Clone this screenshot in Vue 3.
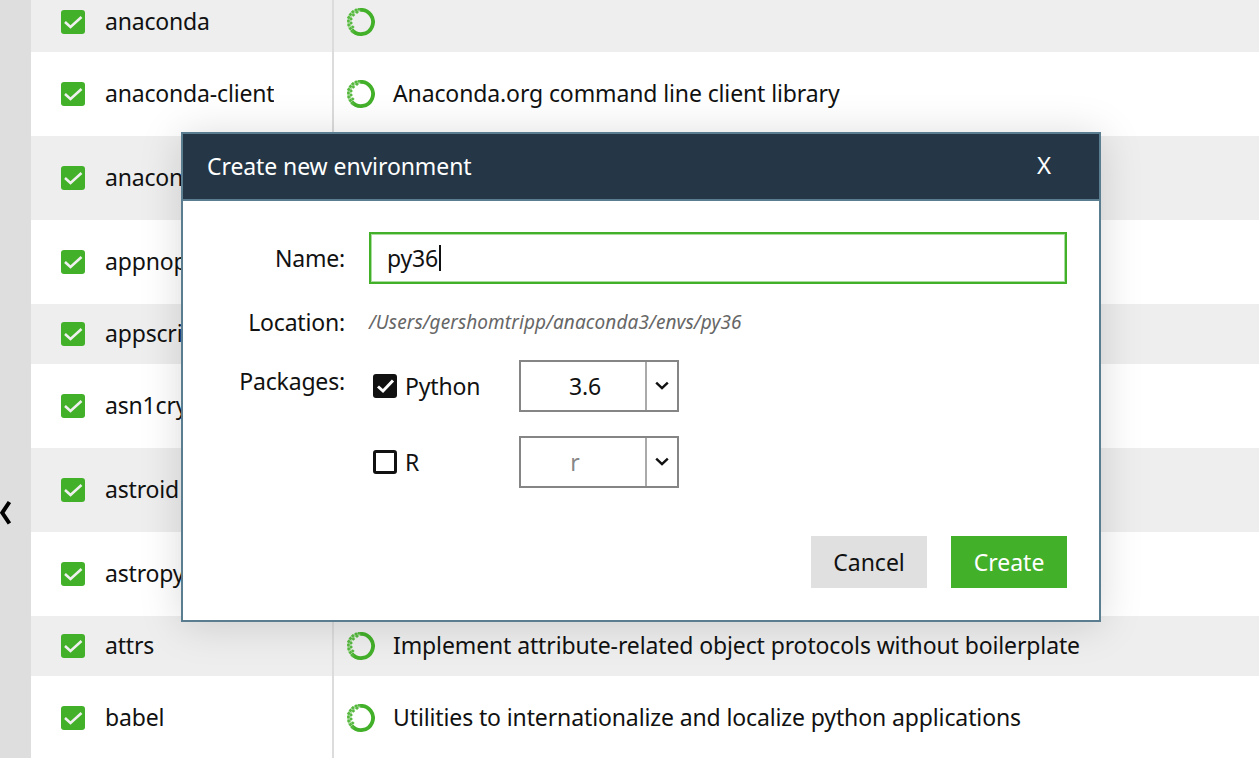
<script setup>
const rows = [
  { name: 'anaconda', desc: '', h: 60, shade: true },
  { name: 'anaconda-client', desc: 'Anaconda.org command line client library', h: 84 },
  { name: 'anaconda-navigator', desc: '', h: 84, shade: true },
  { name: 'appnope', desc: '', h: 84 },
  { name: 'appscript', desc: '', h: 60, shade: true },
  { name: 'asn1crypto', desc: '', h: 84 },
  { name: 'astroid', desc: '', h: 84, shade: true },
  { name: 'astropy', desc: '', h: 84 },
  { name: 'attrs', desc: 'Implement attribute-related object protocols without boilerplate', h: 60, shade: true },
  { name: 'babel', desc: 'Utilities to internationalize and localize python applications', h: 84 }
]
const dots = [[-12.6,-1],[-12.2,3],[-12.2,-4.6],[-10.6,6.6],[-10.6,-7.6],[-8.4,9.4],[-8.2,-10.2],[-5,-12],[-2,-12.8],[-9.9,1],[-9.9,-3],[-7.6,-7],[-4,-9.8],[-8.2,5]]
</script>

<template>
  <div class="page">
    <aside class="side">
      <svg class="chev" width="11" height="26" viewBox="0 0 11 26"><path d="M9.4 2 L2.2 12.8 L9.4 23.5" fill="none" stroke="#000" stroke-width="4"/></svg>
    </aside>
    <main class="table">
      <div v-for="r in rows" :key="r.name" class="row" :class="{ shade: r.shade }" :style="{ height: r.h + 'px' }">
        <div class="c-name">
          <span class="tick">
            <svg width="24" height="24" viewBox="0 0 24 24"><path d="M4 12 L9.5 17 L20.5 7" fill="none" stroke="#f0f0f0" stroke-width="2.5"/></svg>
          </span>
          <span class="pkg">{{ r.name }}</span>
        </div>
        <div class="c-desc">
          <svg class="ring" width="28" height="28" viewBox="-14 -14 28 28">
            <path d="M-1 -12.1 A12.1 12.1 0 1 1 -9.4 7.7" fill="none" stroke="#43b02a" stroke-width="3.8"/>
            <path d="M-9.4 7.7 A12.1 12.1 0 0 1 -1 -12.1" fill="none" stroke="#b5e0aa" stroke-width="3.8"/>
            <rect v-for="(d, i) in dots" :key="i" :x="d[0] - 1.3" :y="d[1] - 1.3" width="2.6" height="2.6" fill="#56b83f" :transform="`rotate(45 ${d[0]} ${d[1]})`"/>
          </svg>
          <span class="desc">{{ r.desc }}</span>
        </div>
      </div>
    </main>

    <section class="dialog">
      <header class="head">
        <span class="title">Create new environment</span>
        <span class="close">X</span>
      </header>
      <div class="body">
        <div class="form">
          <label class="lab name-lab">Name:</label>
          <div class="input"><span>py36</span><i class="caret"></i></div>

          <label class="lab loc-lab">Location:</label>
          <div class="loc">/Users/gershomtripp/anaconda3/envs/py36</div>

          <label class="lab pk-lab">Packages:</label>
          <div class="pks">
            <div class="pk">
              <span class="cb on">
                <svg width="24" height="24" viewBox="0 0 24 24"><path d="M5 12.5 L10 17 L20 6.5" fill="none" stroke="#fff" stroke-width="3"/></svg>
              </span>
              <span class="pk-name">Python</span>
              <div class="select">
                <span class="val">3.6</span>
                <span class="arrow"><svg width="14" height="10" viewBox="0 0 14 10"><path d="M1.2 1.6 L7 7.2 L12.8 1.6" fill="none" stroke="#111" stroke-width="2.4"/></svg></span>
              </div>
            </div>
            <div class="pk">
              <span class="cb"></span>
              <span class="pk-name">R</span>
              <div class="select">
                <span class="val off">r</span>
                <span class="arrow"><svg width="14" height="10" viewBox="0 0 14 10"><path d="M1.2 1.6 L7 7.2 L12.8 1.6" fill="none" stroke="#111" stroke-width="2.4"/></svg></span>
              </div>
            </div>
          </div>
        </div>
        <div class="actions">
          <button class="btn cancel">Cancel</button>
          <button class="btn create">Create</button>
        </div>
      </div>
    </section>
  </div>
</template>

<style scoped>
.page { position: relative; width: 1259px; height: 758px; overflow: hidden; display: flex; background: #fff; font-family: "Noto Sans", "Open Sans", sans-serif; font-size: 23px; letter-spacing: -0.18px; color: #111; }
.side { width: 31px; flex: none; background: #dedede; padding-top: 500px; box-sizing: border-box; }
.chev { display: block; }
.table { flex: 1; margin-top: -8px; }
.row { display: flex; align-items: center; background: #fff; }
.row.shade { background: #eeeeee; }
.c-name { width: 303px; height: 100%; flex: none; display: flex; align-items: center; padding-left: 30px; box-sizing: border-box; border-right: 2px solid #dcdcdc; }
.tick { width: 24px; height: 24px; background: #43b02a; border-radius: 3px; flex: none; }
.tick svg { display: block; }
.pkg { margin-left: 20px; padding-bottom: 2px; white-space: nowrap; overflow: hidden; }
.c-desc { display: flex; align-items: center; padding-left: 13px; }
.ring { flex: none; display: block; }
.desc { margin-left: 18px; padding-bottom: 2px; white-space: nowrap; letter-spacing: -0.12px; }
.dialog { position: absolute; left: 181px; top: 132px; width: 920px; height: 490px; box-sizing: border-box; border: 2px solid #5a7d90; background: #fff; box-shadow: 0 3px 40px rgba(0,0,0,.15); }
.head { background: #253746; color: #fff; display: flex; align-items: center; justify-content: space-between; padding: 0 48px 2px 24px; height: 63px; border-bottom: 2px solid #5a7d90; }
.title { letter-spacing: -0.09px; }
.close { font-size: 24px; padding-bottom: 2px; letter-spacing: 0; }
.body { padding: 31px 32px 0 0; }
.form { display: grid; grid-template-columns: 162px 698px; column-gap: 24px; align-items: start; }
.lab { text-align: right; }
.name-lab { line-height: 52px; }
.input { height: 52px; box-sizing: border-box; border: 2px solid #43b02a; box-shadow: inset 0 0 0 1px rgba(67,176,42,.45); padding-left: 16px; display: flex; align-items: center; }
.caret { width: 2px; height: 26px; background: #111; margin-left: 1px; }
.loc-lab { margin-top: 20px; line-height: 36px; }
.loc { margin-top: 20px; line-height: 36px; font-size: 19px; letter-spacing: 0.1px; font-style: italic; color: #666; }
.pk-lab { margin-top: 23px; line-height: 36px; }
.pks { margin-top: 20px; display: flex; flex-direction: column; gap: 24px; }
.pk { display: flex; align-items: center; height: 52px; padding-left: 4px; }
.cb { width: 24px; height: 24px; box-sizing: border-box; border: 3px solid #111; border-radius: 3px; flex: none; }
.cb.on { background: #111; border: 0; }
.cb svg { display: block; }
.pk-name { margin-left: 8px; width: 114px; }
.select { width: 160px; height: 52px; box-sizing: border-box; border: 2px solid #858585; display: flex; }
.val { flex: 1; text-align: center; line-height: 48px; padding-left: 4px; }
.val.off { color: #888; padding-left: 0; padding-right: 16px; }
.arrow { width: 32px; box-sizing: border-box; border-left: 2px solid #aaa; display: flex; align-items: center; justify-content: center; }
.arrow svg { display: block; }
.actions { display: flex; justify-content: flex-end; gap: 24px; margin-top: 48px; }
.btn { width: 116px; height: 52px; border: 0; font: inherit; padding: 0; }
.cancel { background: #e0e0e0; color: #111; }
.create { background: #43b02a; color: #fff; }
</style>
